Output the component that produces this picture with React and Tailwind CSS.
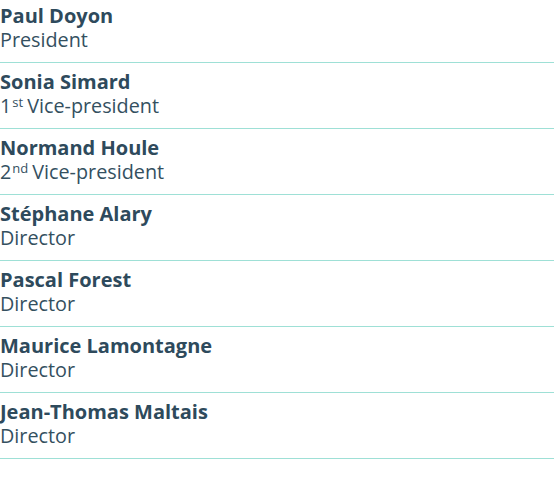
import React from 'react';

const members = [
  { name: 'Paul Doyon', role: 'President' },
  { name: 'Sonia Simard', role: 'Vice-president', ord: '1', sup: 'st' },
  { name: 'Normand Houle', role: 'Vice-president', ord: '2', sup: 'nd' },
  { name: 'Stéphane Alary', role: 'Director' },
  { name: 'Pascal Forest', role: 'Director' },
  { name: 'Maurice Lamontagne', role: 'Director' },
  { name: 'Jean-Thomas Maltais', role: 'Director' },
];

export default function App() {
  return (
    <div className="w-[554px] h-[485px] bg-white overflow-hidden font-['Open_Sans',sans-serif] text-[#2e4a5c]">
      <ul className="-mt-[3px]">
        {members.map((m) => (
          <li key={m.name} className="pt-[7px] pb-[10px] border-b-[1.5px] border-[#9ee0d6]">
            <div className="text-[20px] leading-[24px] font-bold">{m.name}</div>
            <div className="text-[19.8px] leading-[24px] font-normal text-[#34505f]">
              {m.ord && (
                <>
                  {m.ord}
                  <sup className="text-[13px] leading-none top-[-6px] ml-[1px] mr-[4px]">{m.sup}</sup>
                </>
              )}
              {m.role}
            </div>
          </li>
        ))}
      </ul>
    </div>
  );
}
